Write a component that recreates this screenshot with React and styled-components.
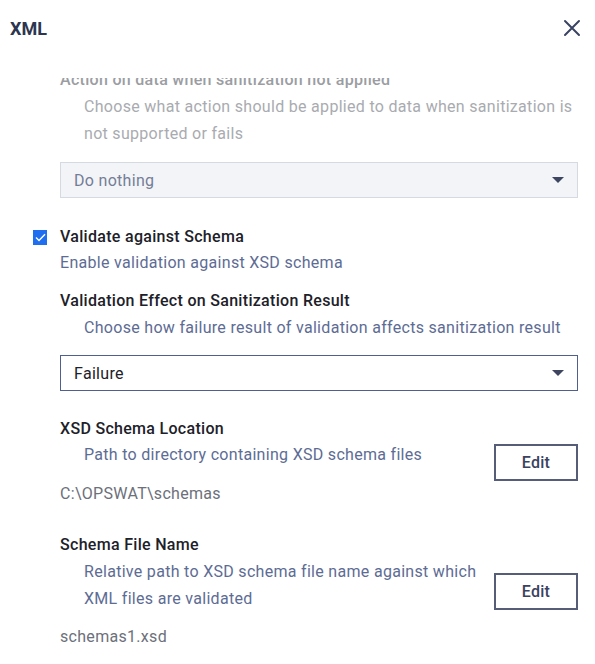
import React, { useLayoutEffect, useRef } from 'react';
import styled, { createGlobalStyle } from 'styled-components';

const GlobalStyle = createGlobalStyle`
  html, body {
    margin: 0;
    padding: 0;
    background: #ffffff;
  }
  body {
    font-family: Roboto, "Liberation Sans", sans-serif;
    letter-spacing: 0.3px;
    -webkit-font-smoothing: antialiased;
  }
`;

const Panel = styled.div`
  width: 595px;
  height: 664px;
  display: flex;
  flex-direction: column;
  background: #ffffff;
  overflow: hidden;
`;

const Header = styled.div`
  height: 56px;
  flex-shrink: 0;
  display: flex;
  align-items: center;
  justify-content: space-between;
  padding: 0 12px 0 10px;
`;

const Title = styled.div`
  font-size: 18px;
  font-weight: 700;
  letter-spacing: 0;
  color: #2c3650;
`;

const CloseButton = styled.button`
  border: none;
  background: none;
  padding: 0;
  width: 22px;
  height: 22px;
  display: flex;
  align-items: center;
  justify-content: center;
  cursor: pointer;
`;

const Body = styled.div`
  flex: 1;
  padding-top: 22px;
  display: flex;
  flex-direction: column;
  min-height: 0;
`;

const Scroll = styled.div`
  flex: 1;
  overflow: hidden;
`;

const Content = styled.div`
  display: flex;
  flex-direction: column;
  padding: 0 17px 40px 60px;
`;

const Label = styled.div`
  font-size: 16px;
  font-weight: 500;
  line-height: 24px;
  color: ${(p) => (p.$disabled ? '#9b9da2' : '#1d2129')};
  margin-top: ${(p) => p.$top || 0}px;
`;

const Description = styled.div`
  font-size: 16px;
  line-height: ${(p) => p.$lh || 26}px;
  color: ${(p) => (p.$disabled ? '#a9abb0' : '#5d6c94')};
  padding-left: ${(p) => (p.$indent ? 24 : 0)}px;
  margin-top: ${(p) => p.$top || 0}px;
`;

const Select = styled.div`
  height: 36px;
  box-sizing: border-box;
  margin-top: ${(p) => p.$top || 0}px;
  display: flex;
  align-items: center;
  justify-content: space-between;
  padding: 0 13px;
  font-size: 16px;
  background: ${(p) => (p.$disabled ? '#f3f4f8' : '#ffffff')};
  border: 1px solid ${(p) => (p.$disabled ? '#d5d9e2' : '#4f608f')};
  color: ${(p) => (p.$disabled ? '#737d96' : '#1d2129')};
`;

const Caret = styled.span`
  width: 0;
  height: 0;
  border-left: 6px solid transparent;
  border-right: 6px solid transparent;
  border-top: 6px solid #3d4560;
`;

const CheckRow = styled.label`
  display: flex;
  align-items: center;
  margin-left: -27px;
  margin-top: ${(p) => p.$top || 0}px;
  gap: 13px;
  font-size: 16px;
  font-weight: 500;
  line-height: 24px;
  color: #1d2129;
`;

const Box = styled.span`
  width: 14px;
  height: 15px;
  background: #1f6ef0;
  display: flex;
  align-items: center;
  justify-content: center;
`;

const FieldRow = styled.div`
  display: flex;
  align-items: flex-start;
  justify-content: space-between;
`;

const EditButton = styled.button`
  width: 84px;
  height: 37px;
  margin-top: ${(p) => p.$top || 0}px;
  flex-shrink: 0;
  box-sizing: border-box;
  border: 2px solid #555d78;
  background: #ffffff;
  font-family: inherit;
  letter-spacing: 0.3px;
  font-size: 16px;
  font-weight: 500;
  color: #3a4260;
  cursor: pointer;
`;

const Value = styled.div`
  font-size: 16px;
  line-height: 24px;
  color: #6c707a;
  margin-top: ${(p) => p.$top || 0}px;
`;

const CloseIcon = () => (
  <svg width="18" height="18" viewBox="0 0 18 18">
    <path d="M2 2 L16 16 M16 2 L2 16" stroke="#3a4462" strokeWidth="2" strokeLinecap="round" />
  </svg>
);

const Check = () => (
  <svg width="11" height="9" viewBox="0 0 11 9">
    <path d="M1 4.5 L4 7.5 L10 1.2" fill="none" stroke="#ffffff" strokeWidth="1.4" />
  </svg>
);

export default function App() {
  const scrollRef = useRef(null);

  useLayoutEffect(() => {
    if (scrollRef.current) scrollRef.current.scrollTop = 10;
  }, []);

  return (
    <Panel>
      <GlobalStyle />
      <Header>
        <Title>XML</Title>
        <CloseButton>
          <CloseIcon />
        </CloseButton>
      </Header>
      <Body>
        <Scroll ref={scrollRef}>
          <Content>
            <Label $disabled>Action on data when sanitization not applied</Label>
            <Description $disabled $indent $lh={27} $top={1}>
              Choose what action should be applied to data when sanitization is not supported or fails
            </Description>
            <Select $disabled $top={15}>
              Do nothing
              <Caret />
            </Select>

            <CheckRow $top={27}>
              <Box>
                <Check />
              </Box>
              Validate against Schema
            </CheckRow>
            <Description $top={1}>Enable validation against XSD schema</Description>

            <Label $top={13}>Validation Effect on Sanitization Result</Label>
            <Description $indent $top={2}>
              Choose how failure result of validation affects sanitization result
            </Description>
            <Select $top={14}>
              Failure
              <Caret />
            </Select>

            <Label $top={26}>XSD Schema Location</Label>
            <FieldRow>
              <Description $indent $top={1}>Path to directory containing XSD schema files</Description>
              <EditButton $top={3}>Edit</EditButton>
            </FieldRow>
            <Value $top={1}>C:\OPSWAT\schemas</Value>

            <Label $top={27}>Schema File Name</Label>
            <FieldRow>
              <Description $indent $top={2} $lh={26.5}>
                Relative path to XSD schema file name against which
                <br />
                XML files are validated
              </Description>
              <EditButton $top={16}>Edit</EditButton>
            </FieldRow>
            <Value $top={13}>schemas1.xsd</Value>
          </Content>
        </Scroll>
      </Body>
    </Panel>
  );
}
